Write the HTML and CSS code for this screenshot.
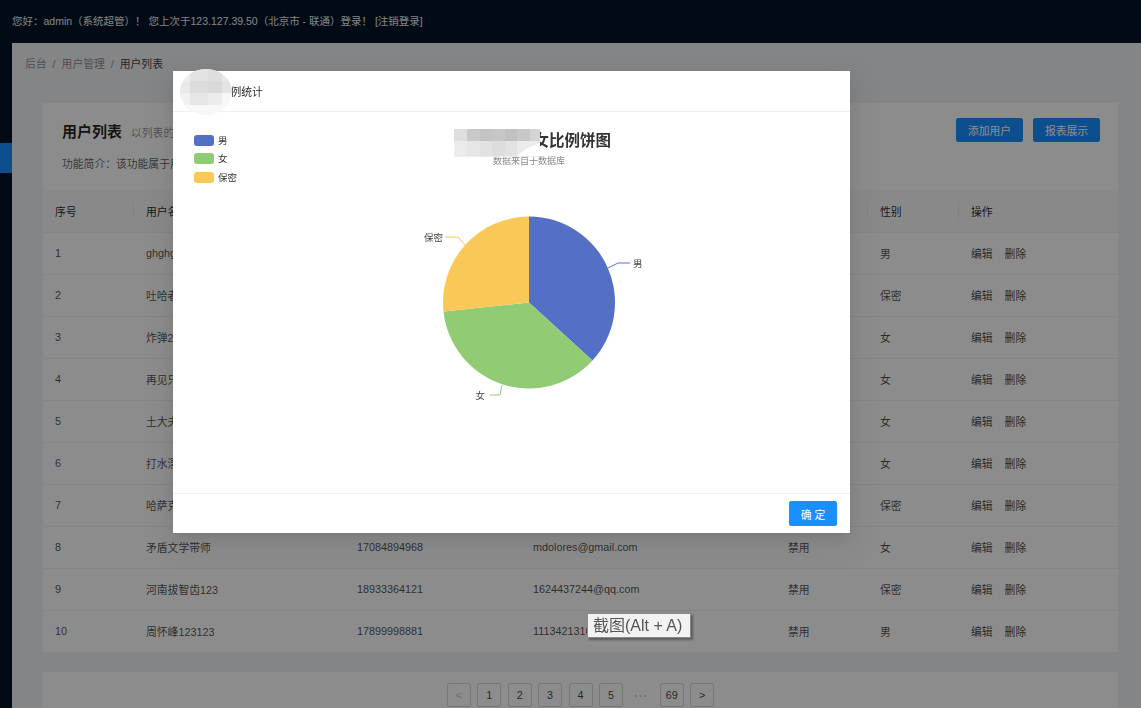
FILE: index.html
```html
<!DOCTYPE html>
<html lang="zh-CN">
<head>
<meta charset="utf-8">
<title>用户列表</title>
<link rel="stylesheet" href="styles.css">
</head>
<body>
<div class="app">
  <header class="topbar">您好：admin（系统超管）！ 您上次于123.127.39.50（北京市 - 联通）登录！ [注销登录]</header>
  <div class="layout">
    <aside class="sider">
      <div class="sider-item"></div>
    </aside>
    <main class="content">
      <nav class="breadcrumb">
        <span>后台</span><span class="sep">/</span><span>用户管理</span><span class="sep">/</span><span class="current">用户列表</span>
      </nav>
      <div class="page-body">
        <section class="card list-card">
          <div class="card-head">
            <div class="head-row">
              <div class="head-title"><h1>用户列表</h1><span class="sub">以列表的形式展示系统中的所有用户信息</span></div>
              <div class="head-actions">
                <button class="btn primary">添加用户</button>
                <button class="btn primary">报表展示</button>
              </div>
            </div>
            <p class="intro">功能简介：该功能属于用户管理模块，管理员可以在此页面对系统中的所有用户进行添加、编辑、删除等操作，点击报表展示按钮可以查看用户相关的报表功能！</p>
          </div>
          <table class="table">
            <colgroup>
              <col class="c-no"><col class="c-name"><col class="c-phone"><col class="c-mail"><col class="c-state"><col class="c-sex"><col class="c-op">
            </colgroup>
            <thead>
              <tr><th>序号</th><th>用户名</th><th>手机号</th><th>邮箱</th><th>状态</th><th>性别</th><th>操作</th></tr>
            </thead>
            <tbody>
              <tr><td>1</td><td>ghghgh</td><td>13812345678</td><td>ghghgh@163.com</td><td>正常</td><td>男</td><td class="ops"><a>编辑</a><a>删除</a></td></tr>
              <tr><td>2</td><td>吐哈者</td><td>15923456789</td><td>tuha@qq.com</td><td>正常</td><td>保密</td><td class="ops"><a>编辑</a><a>删除</a></td></tr>
              <tr><td>3</td><td>炸弹2号</td><td>13698765432</td><td>zhadan@qq.com</td><td>正常</td><td>女</td><td class="ops"><a>编辑</a><a>删除</a></td></tr>
              <tr><td>4</td><td>再见只是陌生人</td><td>18812340987</td><td>zaijian@163.com</td><td>正常</td><td>女</td><td class="ops"><a>编辑</a><a>删除</a></td></tr>
              <tr><td>5</td><td>土大夫</td><td>17712345678</td><td>tudafu@gmail.com</td><td>禁用</td><td>女</td><td class="ops"><a>编辑</a><a>删除</a></td></tr>
              <tr><td>6</td><td>打水漂</td><td>15012349876</td><td>dashui@qq.com</td><td>正常</td><td>女</td><td class="ops"><a>编辑</a><a>删除</a></td></tr>
              <tr><td>7</td><td>哈萨克斯坦</td><td>13312345678</td><td>hasake@qq.com</td><td>禁用</td><td>保密</td><td class="ops"><a>编辑</a><a>删除</a></td></tr>
              <tr><td>8</td><td>矛盾文学带师</td><td>17084894968</td><td>mdolores@gmail.com</td><td>禁用</td><td>女</td><td class="ops"><a>编辑</a><a>删除</a></td></tr>
              <tr><td>9</td><td>河南拔智齿123</td><td>18933364121</td><td>1624437244@qq.com</td><td>禁用</td><td>保密</td><td class="ops"><a>编辑</a><a>删除</a></td></tr>
              <tr><td>10</td><td>周怀峰123123</td><td>17899998881</td><td>1113421310@qq.com</td><td>禁用</td><td>男</td><td class="ops"><a>编辑</a><a>删除</a></td></tr>
            </tbody>
          </table>
        </section>
        <section class="card pager-card">
          <ul class="pager">
            <li class="disabled">&lt;</li>
            <li>1</li>
            <li>2</li>
            <li>3</li>
            <li>4</li>
            <li>5</li>
            <li class="dots">•••</li>
            <li>69</li>
            <li>&gt;</li>
          </ul>
        </section>
      </div>
    </main>
  </div>
</div>

<div class="mask"></div>

<div class="modal">
  <div class="modal-header">
    <span class="modal-title">性别比例统计</span>
    <svg class="mosaic mosaic-title" width="52" height="46" viewBox="0 0 52 46">
      <defs><clipPath id="blob1"><ellipse cx="26" cy="23" rx="26" ry="23"/></clipPath></defs>
      <g clip-path="url(#blob1)">
        <rect x="0" y="0" width="52" height="46" fill="#f3f3f3"/>
        <rect x="0" y="0" width="10" height="12" fill="#ececec"/>
        <rect x="10" y="0" width="18" height="12" fill="#e3e3e3"/>
        <rect x="28" y="0" width="14" height="12" fill="#dedede"/>
        <rect x="42" y="0" width="10" height="12" fill="#e8e8e8"/>
        <rect x="0" y="12" width="10" height="12" fill="#eaeaea"/>
        <rect x="10" y="12" width="18" height="12" fill="#dcdcdc"/>
        <rect x="28" y="12" width="14" height="12" fill="#d9d9d9"/>
        <rect x="42" y="12" width="10" height="12" fill="#e4e4e4"/>
        <rect x="0" y="24" width="10" height="12" fill="#f1f1f1"/>
        <rect x="10" y="24" width="18" height="12" fill="#e6e6e6"/>
        <rect x="28" y="24" width="14" height="12" fill="#ececec"/>
        <rect x="42" y="24" width="10" height="12" fill="#f7f7f7"/>
        <rect x="0" y="36" width="52" height="10" fill="#f8f8f8"/>
      </g>
    </svg>
  </div>
  <div class="modal-body">
    <svg class="chart" width="677" height="380" viewBox="0 0 677 380">
      <g class="legend">
        <rect x="21" y="23" width="20" height="11" rx="3" fill="#5470c6"/>
        <text x="45" y="32">男</text>
        <rect x="21" y="41" width="20" height="11" rx="3" fill="#91cc75"/>
        <text x="45" y="50">女</text>
        <rect x="21" y="60" width="20" height="11" rx="3" fill="#fac858"/>
        <text x="45" y="69">保密</text>
      </g>
      <text class="chart-title" x="438" y="34" text-anchor="end">系统用户男女比例饼图</text>
      <text class="chart-sub" x="356" y="52" text-anchor="middle">数据来自于数据库</text>
      <path d="M356,190.5 L356,104.5 A86,86 0 0 1 419.5,248.5 Z" fill="#5470c6"/>
      <path d="M356,190.5 L419.5,248.5 A86,86 0 0 1 270.5,199.5 Z" fill="#91cc75"/>
      <path d="M356,190.5 L270.5,199.5 A86,86 0 0 1 356,104.5 Z" fill="#fac858"/>
      <polyline points="435,156 445,151 457,151" fill="none" stroke="#5470c6" stroke-width="1"/>
      <polyline points="329,273 327,283 317,283" fill="none" stroke="#91cc75" stroke-width="1"/>
      <polyline points="292,133 285,125 272,125" fill="none" stroke="#fac858" stroke-width="1"/>
      <text class="pie-label" x="460" y="155">男</text>
      <text class="pie-label" x="312" y="287" text-anchor="end">女</text>
      <text class="pie-label" x="270" y="129" text-anchor="end">保密</text>
      <g class="mosaic-chart">
        <rect x="281" y="17" width="86" height="28" rx="2" fill="#ececec"/>
        <rect x="281" y="17" width="13" height="12" fill="#dedede"/>
        <rect x="294" y="17" width="13" height="12" fill="#c9c9c9"/>
        <rect x="307" y="17" width="12" height="12" fill="#c4c4c4"/>
        <rect x="319" y="17" width="13" height="12" fill="#c6c6c6"/>
        <rect x="332" y="17" width="12" height="12" fill="#c1c1c1"/>
        <rect x="344" y="17" width="13" height="12" fill="#c8c8c8"/>
        <rect x="357" y="17" width="10" height="12" fill="#d4d4d4"/>
        <rect x="281" y="29" width="13" height="15" fill="#ebebeb"/>
        <rect x="294" y="29" width="13" height="15" fill="#e6e6e6"/>
        <rect x="307" y="29" width="12" height="15" fill="#e2e2e2"/>
        <rect x="319" y="29" width="13" height="15" fill="#dddddd"/>
        <rect x="332" y="29" width="12" height="15" fill="#e2e2e2"/>
        <path d="M344,29 L367,29 L367,31 Q352,36 344,44 Z" fill="#ebebeb"/>
        <path d="M367,31 Q352,36 344,44 L367,44 Z" fill="#ffffff"/>
      </g>
    </svg>
  </div>
  <div class="modal-footer">
    <button class="btn primary ok">确 定</button>
  </div>
</div>

<div class="tooltip">截图(Alt + A)</div>
</body>
</html>
```
FILE: styles.css
```css
* { box-sizing: border-box; }
html, body { margin: 0; padding: 0; }
body {
  width: 1141px;
  height: 708px;
  overflow: hidden;
  position: relative;
  background: #f0f2f5;
  font-family: "Liberation Sans", "Noto Sans CJK SC", sans-serif;
  font-size: 10.8px;
  color: rgba(0, 0, 0, 0.65);
}
.app { display: flex; flex-direction: column; height: 708px; }
.topbar {
  flex: none;
  height: 43px;
  background: #001529;
  color: #f0f0f0;
  font-size: 10.5px;
  display: flex;
  align-items: center;
  padding: 0 12px 3px;
  white-space: nowrap;
}
.layout { flex: 1; display: flex; min-height: 0; }
.sider { flex: none; width: 12px; background: #001529; padding-top: 100px; }
.sider-item { height: 30px; background: #1890ff; }
.content { flex: 1; min-width: 0; display: flex; flex-direction: column; background: #f0f2f5; }
.breadcrumb { flex: none; height: 60px; padding: 11px 13px 0; line-height: 20px; color: rgba(0, 0, 0, 0.45); }
.breadcrumb .sep { margin: 0 6px; }
.breadcrumb .current { color: rgba(0, 0, 0, 0.75); }
.page-body { padding: 0 23px 0 31px; display: flex; flex-direction: column; gap: 20px; }
.card { background: #ffffff; }
.card-head { padding: 15px 18px 16px 19px; }
.head-row { display: flex; justify-content: space-between; align-items: center; height: 24px; }
.head-title { display: flex; align-items: baseline; }
.head-title h1 { margin: 0; font-size: 15px; font-weight: bold; color: rgba(0, 0, 0, 0.85); }
.sub { margin-left: 9px; color: rgba(0, 0, 0, 0.45); }
.head-actions { display: flex; gap: 10px; }
.btn {
  font-family: inherit;
  font-size: 10.8px;
  height: 24px;
  width: 67px;
  padding: 0;
  border-radius: 2px;
  border: 1px solid #1890ff;
  background: #1890ff;
  color: #ffffff;
  cursor: pointer;
}
.intro { margin: 12px 0 0; line-height: 20px; white-space: nowrap; }
.table { width: 100%; border-collapse: collapse; table-layout: fixed; }
.c-no { width: 91px; }
.c-name { width: 211px; }
.c-phone { width: 176px; }
.c-mail { width: 255px; }
.c-state { width: 92px; }
.c-sex { width: 91px; }
.c-op { width: 159px; }
.table th, .table td {
  height: 42px;
  padding: 0 12px;
  text-align: left;
  font-weight: normal;
  white-space: nowrap;
  overflow: hidden;
  border-bottom: 1px solid #f0f0f0;
  color: rgba(0, 0, 0, 0.7);
}
.table th {
  background: #fafafa linear-gradient(rgba(0, 0, 0, 0.06), rgba(0, 0, 0, 0.06)) right center / 1px 17px no-repeat;
  color: rgba(0, 0, 0, 0.85);
}
.table th:last-child { background: #fafafa; }
.table tbody tr:last-child td { border-bottom: none; }
.ops a { margin-right: 12px; color: rgba(0, 0, 0, 0.75); }
.pager-card { padding: 11px 0 12px; }
.pager { list-style: none; margin: 0; padding: 0; display: flex; justify-content: center; gap: 6.4px; }
.pager li {
  width: 24px;
  height: 24px;
  border: 1px solid #d9d9d9;
  border-radius: 2px;
  background: #ffffff;
  display: flex;
  align-items: center;
  justify-content: center;
  color: rgba(0, 0, 0, 0.75);
}
.pager li.disabled { color: rgba(0, 0, 0, 0.25); }
.pager li.dots { border-color: transparent; background: transparent; color: rgba(0, 0, 0, 0.25); font-size: 7px; letter-spacing: 2px; }

.mask { position: fixed; inset: 0; background: rgba(0, 0, 0, 0.45); }

.modal {
  position: absolute;
  left: 173px;
  top: 71px;
  width: 677px;
  height: 462px;
  background: #ffffff;
  display: flex;
  flex-direction: column;
  box-shadow: 0 3px 6px -4px rgba(0, 0, 0, 0.12), 0 6px 16px rgba(0, 0, 0, 0.08), 0 9px 28px 8px rgba(0, 0, 0, 0.05);
}
.modal-header {
  position: relative;
  flex: none;
  height: 41px;
  border-bottom: 1px solid #f0f0f0;
  display: flex;
  align-items: center;
  padding: 0 0 1px 25px;
  color: rgba(0, 0, 0, 0.85);
  font-size: 10.8px;
}
.mosaic-title { position: absolute; left: 7px; top: -2px; }
.modal-body { flex: 1; min-height: 0; }
.chart { display: block; font-family: "Liberation Sans", "Noto Sans CJK SC", sans-serif; }
.legend text { font-size: 9.5px; fill: #333333; }
.chart-title { font-size: 15.5px; font-weight: bold; fill: #333333; }
.chart-sub { font-size: 9px; fill: #888888; }
.pie-label { font-size: 9.5px; fill: #444444; }
.modal-footer {
  flex: none;
  height: 40px;
  border-top: 1px solid #f0f0f0;
  display: flex;
  justify-content: flex-end;
  align-items: center;
  padding: 0 13px 0 0;
}
.btn.ok { width: 48px; height: 25px; border-color: #1890ff; }

.tooltip {
  position: absolute;
  left: 587px;
  top: 613px;
  width: 104px;
  height: 25px;
  background: #f2f2f2;
  border: 1px solid #8a8a8a;
  box-shadow: 2px 2px 2px rgba(0, 0, 0, 0.35);
  color: #555555;
  font-family: "Liberation Sans", "Noto Sans CJK SC", sans-serif;
  font-size: 16px;
  line-height: 23px;
  padding-left: 5px;
  white-space: nowrap;
}
```
